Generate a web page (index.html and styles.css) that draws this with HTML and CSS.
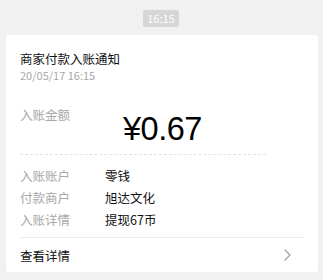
FILE: index.html
```html
<!DOCTYPE html>
<html lang="zh">
<head>
<meta charset="utf-8">
<link rel="stylesheet" href="styles.css">
</head>
<body>
<div class="time-wrap"><span class="time">16:15</span></div>
<div class="card">
  <div class="title">商家付款入账通知</div>
  <div class="date">20/05/17 16:15</div>
  <div class="amount-row">
    <div class="label">入账金额</div>
    <div class="amount">¥0.67</div>
  </div>
  <div class="dash"></div>
  <div class="rows">
    <div class="row"><span class="label">入账账户</span><span class="value">零钱</span></div>
    <div class="row"><span class="label">付款商户</span><span class="value">旭达文化</span></div>
    <div class="row"><span class="label">入账详情</span><span class="value">提现67币</span></div>
  </div>
  <div class="footer">
    <span>查看详情</span>
    <svg class="chev" width="9" height="14" viewBox="0 0 9 14"><path d="M1.5 1.5 L7 7 L1.5 12.5" fill="none" stroke="#a0a0a0" stroke-width="1.2"/></svg>
  </div>
</div>
</body>
</html>
```
FILE: styles.css
```css
html, body {
  margin: 0;
  padding: 0;
}
body {
  background: #f1f1f1;
  font-family: "Noto Sans CJK SC", "Noto Sans", sans-serif;
  color: #111;
  width: 323px;
  height: 280px;
  overflow: hidden;
}
.time-wrap {
  display: flex;
  justify-content: center;
  padding-top: 10px;
  height: 17px;
}
.time {
  display: block;
  width: 36px;
  height: 17px;
  line-height: 17px;
  background: #d6d6d6;
  color: #fff;
  font-size: 11px;
  text-align: center;
  border-radius: 2px;
  margin-left: -1px;
}
.card {
  margin: 8px 5px 0 6px;
  background: #fff;
  border-radius: 3px;
  padding: 15px 14px 0 14px;
  height: 222px;
}
.title {
  font-size: 12.5px;
  line-height: 17px;
  color: #111;
}
.date {
  font-size: 11px;
  line-height: 16px;
  color: #a8a8a8;
}
.amount-row {
  display: flex;
  margin-top: 23px;
  height: 48px;
}
.label {
  font-size: 12.5px;
  line-height: 18px;
  color: #a8a8a8;
  width: 85px;
  flex: none;
}
.amount-row .label {
  width: 103px;
}
.amount {
  font-family: "Liberation Sans", sans-serif;
  font-size: 32.5px;
  line-height: 36px;
  margin-top: 5px;
  color: #000;
  letter-spacing: -0.5px;
}
.dash {
  width: 246px;
  border-top: 1px dashed #e2e2e2;
  margin-top: 0;
}
.rows {
  margin-top: 10px;
}
.row {
  display: flex;
  height: 22px;
  align-items: center;
}
.row .label {
  line-height: 22px;
}
.value {
  font-size: 12.5px;
  line-height: 22px;
  color: #111;
}
.footer {
  margin-top: 6px;
  border-top: 1px solid #ececec;
  height: 34px;
  display: flex;
  align-items: center;
  justify-content: space-between;
  font-size: 12.5px;
  color: #111;
  padding-right: 12px;
}
.chev {
  display: block;
}
```
